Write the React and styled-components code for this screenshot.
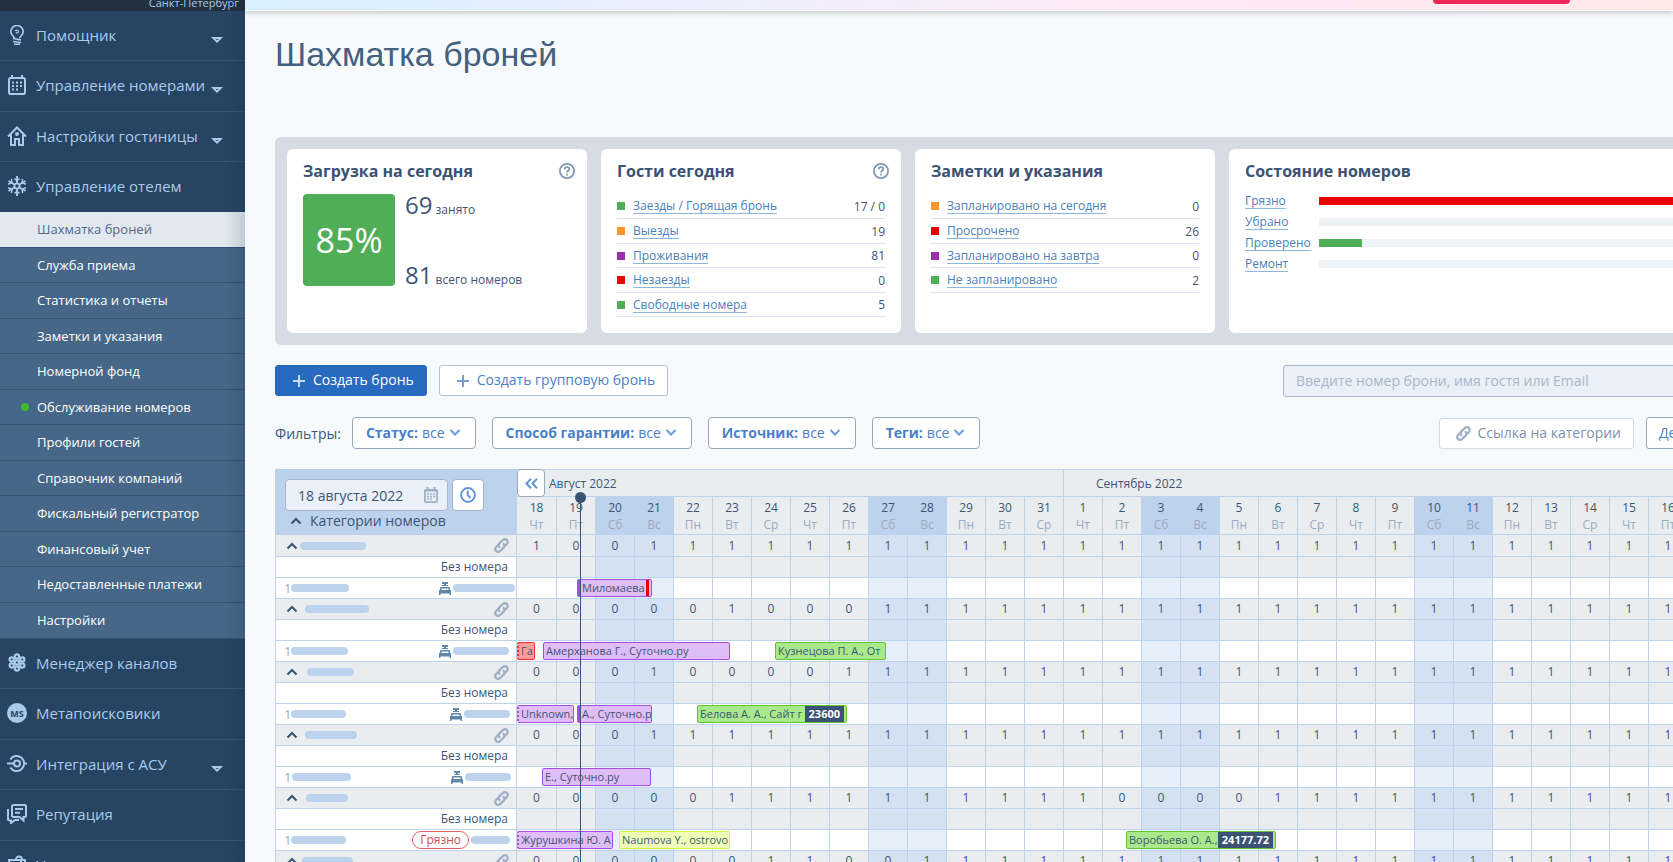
import { Fragment } from "react";
import styled, { createGlobalStyle, css } from "styled-components";

const DAY_WIDTH = 39;

const menuTop = [
  { icon: "bulb", label: "Помощник", arrow: true },
  { icon: "calendar", label: "Управление номерами", arrow: true },
  { icon: "house", label: "Настройки гостиницы", arrow: true },
  { icon: "snow", label: "Управление отелем", open: true },
  { icon: "flower", label: "Менеджер каналов" },
  { icon: "ms", label: "Метапоисковики" },
  { icon: "target", label: "Интеграция с АСУ", arrow: true },
  { icon: "chat", label: "Репутация" },
  { icon: "bag", label: "Услуги" },
];

const subMenu = [
  { label: "Шахматка броней", active: true },
  { label: "Служба приема" },
  { label: "Статистика и отчеты" },
  { label: "Заметки и указания" },
  { label: "Номерной фонд" },
  { label: "Обслуживание номеров", dot: true },
  { label: "Профили гостей" },
  { label: "Справочник компаний" },
  { label: "Фискальный регистратор" },
  { label: "Финансовый учет" },
  { label: "Недоставленные платежи" },
  { label: "Настройки" },
];

const guests = [
  { color: "#50ad58", label: "Заезды / Горящая бронь", value: "17 / 0" },
  { color: "#ff962d", label: "Выезды", value: "19" },
  { color: "#9a2fae", label: "Проживания", value: "81" },
  { color: "#ea0000", label: "Незаезды", value: "0" },
  { color: "#50ad58", label: "Свободные номера", value: "5" },
];

const notes = [
  { color: "#ff962d", label: "Запланировано на сегодня", value: "0" },
  { color: "#ea0000", label: "Просрочено", value: "26" },
  { color: "#9a2fae", label: "Запланировано на завтра", value: "0" },
  { color: "#50ad58", label: "Не запланировано", value: "2" },
];

const roomStates = [
  { label: "Грязно", color: "#ea0000", percent: 100 },
  { label: "Убрано", color: "#50ad58", percent: 0 },
  { label: "Проверено", color: "#50ad58", percent: 11.5 },
  { label: "Ремонт", color: "#50ad58", percent: 0 },
];

const filters = ["Статус:", "Способ гарантии:", "Источник:", "Теги:"];

const weekDays = ["Чт", "Пт", "Сб", "Вс", "Пн", "Вт", "Ср"];

const days = Array.from({ length: 31 }, (_, i) => {
  const name = weekDays[i % 7];
  return {
    number: i < 14 ? i + 18 : i - 13,
    name,
    weekend: name === "Сб" || name === "Вс",
  };
});

const groups = [
  {
    free: "1001",
    name: [24, 66],
    room: [15, 58],
    bed: true,
    tag: 62,
    tagEnd: 1,
    bookings: [
      { start: 60, width: 75, kind: "purple", text: "Миломаева", edge: "solid", debt: true },
    ],
  },
  {
    free: "000001000",
    name: [29, 64],
    room: [15, 57],
    bed: true,
    tag: 56,
    tagEnd: 7,
    bookings: [
      { start: 0, width: 18, kind: "red", text: "Га", edge: "dotted" },
      { start: 26, width: 187, kind: "purple", text: "Амерханова Г., Суточно.ру" },
      { start: 258, width: 111, kind: "green", text: "Кузнецова П. А., От" },
    ],
  },
  {
    free: "00010000",
    name: [31, 47],
    room: [15, 55],
    bed: true,
    tag: 46,
    tagEnd: 6,
    bookings: [
      { start: 0, width: 57, kind: "purple", text: "Unknown,", edge: "dotted" },
      { start: 60, width: 75, kind: "purple", text: "А., Суточно.ру", edge: "solid" },
      { start: 180, width: 150, kind: "green", text: "Белова А. А., Сайт г", sum: "23600" },
    ],
  },
  {
    free: "0001",
    name: [29, 52],
    room: [16, 59],
    bed: true,
    tag: 46,
    tagEnd: 5,
    bookings: [{ start: 25, width: 109, kind: "purple", text: "Е., Суточно.ру" }],
  },
  {
    free: "0000011111111110000",
    name: [30, 42],
    room: [15, 55],
    dirty: true,
    tag: 39,
    tagEnd: 6,
    bookings: [
      { start: 0, width: 96, kind: "purple", text: "Журушкина Ю. А", edge: "dotted" },
      { start: 102, width: 111, kind: "yellow", text: "Naumova Y., ostrovo" },
      { start: 609, width: 150, kind: "green", text: "Воробьева О. А.,", sum: "24177.72" },
    ],
  },
  {
    free: "0000001100",
    name: [26, 51],
    room: [15, 55],
    bed: true,
    tag: 46,
    tagEnd: 6,
    bookings: [],
  },
];

const icons = {
  bulb: (
    <g fill="none" stroke="currentColor" strokeWidth="1.7">
      <path d="M7.500 13.500c0-2.200-3.700-3.200-3.700-6.800a6.200 6.200 0 0 1 12.400 0c0 3.600-3.700 4.600-3.700 6.800" />
      <path d="M8.200 6c.8-1.200 3.300-.9 3.300.7 0 1.400-2 1.600-2.500.7" strokeWidth="1.300" />
      <path d="M6 13.500l8 1.500M6 16.500l8 1M7 19.300h6" />
    </g>
  ),
  calendar: (
    <g fill="none" stroke="currentColor" strokeWidth="2">
      <rect x="2" y="3" width="16" height="16" rx="1.800" />
      <path d="M5 0v3M15 0v3" />
      <path
        d="M5 7.500h2M9 7.500h2M13 7.500h2M5 11h2M9 11h2M13 11h2M5 14.500h2M9 14.500h2"
      />
    </g>
  ),
  house: (
    <g fill="none" stroke="currentColor" strokeWidth="2">
      <path d="M1 10.500l9-9 9 9" />
      <path d="M4 8.500v10.500h4v-6h4v6h4V8.500" />
      <circle cx="10" cy="8" r="2" fill="currentColor" stroke="none" />
    </g>
  ),
  snow: (
    <g fill="none" stroke="currentColor" strokeWidth="1.900">
      <circle cx="10" cy="10" r="2.600" />
      <path d="M10 0v7M10 13v7M1.500 5l6 3.500M12.500 11.500l6 3.500M18.500 5l-6 3.500M7.500 11.500l-6 3.500" />
      <path
        d="M7.500 2.500L10 4.800l2.500-2.300M7.500 17.500l2.500-2.300 2.500 2.300M1 8.300l4-1.500-.6-4M19 8.300l-4-1.500.6-4M1 11.700l4 1.500-.6 4M19 11.700l-4 1.500.6 4"
        strokeWidth="1.500"
      />
    </g>
  ),
  flower: (
    <g fill="none" stroke="currentColor" strokeWidth="2.200">
      <circle cx="10" cy="9.500" r="2.100" />
      <circle cx="10" cy="3.500" r="2.100" />
      <circle cx="10" cy="15.500" r="2.100" />
      <circle cx="4.700" cy="6.500" r="2.100" />
      <circle cx="15.300" cy="6.500" r="2.100" />
      <circle cx="4.700" cy="12.500" r="2.100" />
      <circle cx="15.300" cy="12.500" r="2.100" />
    </g>
  ),
  target: (
    <g fill="none" stroke="currentColor" strokeWidth="2">
      <circle cx="10" cy="9.500" r="3" />
      <path d="M0 9.500h7M17 9.500h3" />
      <path d="M3.300 5.500a7.500 7.500 0 1 1 0 8" />
    </g>
  ),
  chat: (
    <g fill="none" stroke="currentColor" strokeWidth="2">
      <path d="M6 1h11.500q1.500 0 1.500 1.500v9q0 1.500-1.500 1.500h-1v3.500L12.500 13H6.500Q5 13 5 11.500v-9Q5 1 6 1z" />
      <path d="M8 5h8M8 8.700h5" />
      <path d="M1 5v10.500q0 1 1.500 1H4V19l4-3h4" />
    </g>
  ),
  bag: (
    <g fill="none" stroke="currentColor" strokeWidth="1.900">
      <path d="M2 20V5h12v15" />
      <path d="M9 4.500c0-4 6-4 6 0M14 5h4v15" />
    </g>
  ),
};

const MenuIcon = ({ name }) =>
  name === "ms" ? (
    <MsBadge>MS</MsBadge>
  ) : (
    <svg width="20" height="20" viewBox="0 0 20 20" aria-hidden="true">
      {icons[name]}
    </svg>
  );

const MenuArrow = () => (
  <svg width="12" height="6" viewBox="0 0 12 6" aria-hidden="true">
    <path d="M0 0h12L6 6z" fill="#a9cbea" />
    <path d="M4.500 2h3L6 3.300z" fill="#274463" />
  </svg>
);

const Chevron = ({ up, size = 12, color = "#6c9bd8" }) => (
  <svg width={size} height={size} viewBox="0 0 12 12" aria-hidden="true">
    <path
      d={up ? "M1.500 8.500L6 4l4.500 4.500" : "M1.500 4L6 8.500 10.500 4"}
      fill="none"
      stroke={color}
      strokeWidth="2"
    />
  </svg>
);

const Plus = () => (
  <svg width="12" height="12" viewBox="0 0 12 12" aria-hidden="true">
    <path d="M6 0v12M0 6h12" stroke="currentColor" strokeWidth="2" opacity=".75" />
  </svg>
);

const LinkIcon = () => (
  <svg width="15" height="15" viewBox="0 0 14 14" aria-hidden="true">
    <g fill="none" stroke="#a0afc4" strokeWidth="2.100" strokeLinecap="round">
      <path d="M5 8.500a2.600 2.600 0 0 1 0-3.500L8.300 1.900a2.600 2.600 0 0 1 3.700 3.700L10.600 7" />
      <path d="M9 5.500a2.600 2.600 0 0 1 0 3.500l-3.300 3.100A2.600 2.600 0 0 1 2 8.400L3.400 7" />
    </g>
  </svg>
);

const BedIcon = () => (
  <svg width="12" height="13" viewBox="0 0 12 13" aria-hidden="true">
    <g fill="#5f88a9">
      <path d="M3 0h6v2H7v1h2v1H3V3h2V2H3z" />
      <path d="M2 5h8q1 0 1 1v2h1v5h-1.500v-1.500h-9V13H0V8h1V6q0-1 1-1zm.5 1.500V8h7V6.500z" />
    </g>
  </svg>
);

const HelpIcon = () => (
  <svg width="16" height="16" viewBox="0 0 16 16" aria-hidden="true">
    <g fill="none" stroke="#7f98b3" strokeWidth="1.800">
      <circle cx="8" cy="8" r="7.100" />
      <path d="M5.700 6.300c0-3 4.600-2.900 4.600-.2C10.300 7.800 8 7.800 8 9.500" />
      <path d="M8 10.800v1.600" />
    </g>
  </svg>
);

const CalendarIcon = () => (
  <svg width="14" height="16" viewBox="0 0 14 16" aria-hidden="true">
    <g fill="none" stroke="#9fb0c6">
      <rect x=".9" y="2.900" width="12.200" height="12.200" rx="1" strokeWidth="1.800" />
      <path d="M3.500 0v3M10.500 0v3M1 3.500h12" strokeWidth="2" />
      <path d="M3 7h2M6 7h2M9 7h2M3 9.500h2M6 9.500h2M9 9.500h2M3 12h2M6 12h2" strokeWidth="1.600" />
    </g>
  </svg>
);

const ClockIcon = () => (
  <svg width="16" height="16" viewBox="0 0 16 16" aria-hidden="true">
    <g fill="none" stroke="#6496d8" strokeWidth="2">
      <circle cx="8" cy="8" r="6.900" />
      <path d="M7.700 3.500V8l2.600 3" />
    </g>
  </svg>
);

const DoubleLeft = () => (
  <svg width="13" height="11" viewBox="0 0 13 11" aria-hidden="true">
    <path
      d="M6 .8L1.500 5.500 6 10.200M12 .8L7.500 5.500 12 10.200"
      fill="none"
      stroke="#6496d8"
      strokeWidth="2"
    />
  </svg>
);

const StatCard = ({ title, rows, help }) => (
  <Card>
    <CardTitle>
      {title}
      {help && <HelpIcon />}
    </CardTitle>
    <StatList>
      {rows.map((row) => (
        <StatRow key={row.label}>
          <Marker $color={row.color} />
          <DataLink href="#">{row.label}</DataLink>
          <StatValue>{row.value}</StatValue>
        </StatRow>
      ))}
    </StatList>
  </Card>
);

const App = () => {
  return (
    <Page>
      <GlobalStyle />
      <Sidebar>
        <City>Санкт-Петербург</City>
        <Menu>
          {menuTop.map((item) => (
            <MenuItem key={item.label}>
              <MenuLink href="#" $open={item.open}>
                <IconSlot>
                  <MenuIcon name={item.icon} />
                </IconSlot>
                {item.label}
                {item.arrow && (
                  <ArrowSlot>
                    <MenuArrow />
                  </ArrowSlot>
                )}
              </MenuLink>
              {item.open && (
                <SubMenu>
                  {subMenu.map((sub) => (
                    <SubItem key={sub.label} $active={sub.active}>
                      {sub.dot && <Dot />}
                      <a href="#">{sub.label}</a>
                    </SubItem>
                  ))}
                </SubMenu>
              )}
            </MenuItem>
          ))}
        </Menu>
        <SidebarShade />
      </Sidebar>

      <Main>
        <Banner>
          <BannerButton aria-label="Подробнее" />
        </Banner>
        <Content>
          <Title>Шахматка броней</Title>

          <Panel>
            <Card>
              <CardTitle>
                Загрузка на сегодня
                <HelpIcon />
              </CardTitle>
              <Occupancy>
                <Percent>85%</Percent>
                <Totals>
                  <p>
                    <big>69</big> занято
                  </p>
                  <p>
                    <big>81</big> всего номеров
                  </p>
                </Totals>
              </Occupancy>
            </Card>
            <StatCard title="Гости сегодня" rows={guests} help />
            <StatCard title="Заметки и указания" rows={notes} />
            <Card $wide>
              <CardTitle>Состояние номеров</CardTitle>
              {roomStates.map((state) => (
                <StateRow key={state.label}>
                  <span>
                    <DataLink href="#">{state.label}</DataLink>
                  </span>
                  <Track>
                    <Bar $color={state.color} style={{ width: `${state.percent}%` }} />
                  </Track>
                </StateRow>
              ))}
            </Card>
          </Panel>

          <Toolbar>
            <PrimaryButton>
              <Plus />
              Создать бронь
            </PrimaryButton>
            <OutlineButton>
              <Plus />
              Создать групповую бронь
            </OutlineButton>
            <Search
              type="search"
              aria-label="Поиск брони"
              placeholder="Введите номер брони, имя гостя или Email"
            />
          </Toolbar>

          <Filters>
            <FiltersLabel>Фильтры:</FiltersLabel>
            {filters.map((name) => (
              <Filter key={name}>
                <b>{name}</b>
                <select>
                  <option>все</option>
                </select>
                <Chevron />
              </Filter>
            ))}
            <FiltersRight>
              <CategoryButton>
                <LinkIcon />
                Ссылка на категории
              </CategoryButton>
              <PeriodButton>День</PeriodButton>
            </FiltersRight>
          </Filters>

          <Board>
            <Table>
              <thead>
                <tr>
                  <Corner rowSpan={2}>
                    <DateRow>
                      <DateField>
                        <input aria-label="Дата" defaultValue="18 августа 2022" />
                        <CalendarIcon />
                      </DateField>
                      <ClockButton aria-label="Сегодня">
                        <ClockIcon />
                      </ClockButton>
                    </DateRow>
                    <CategoriesToggle>
                      <Chevron up color="#3a5274" />
                      Категории номеров
                    </CategoriesToggle>
                  </Corner>
                  <Month colSpan={14}>
                    <PrevButton aria-label="Назад">
                      <DoubleLeft />
                    </PrevButton>
                    Август 2022
                  </Month>
                  <Month colSpan={17}>Сентябрь 2022</Month>
                </tr>
                <tr>
                  {days.map((day, i) => (
                    <DayHead key={i} $weekend={day.weekend}>
                      {day.number}
                      <span>{day.name}</span>
                    </DayHead>
                  ))}
                </tr>
              </thead>
              <tbody>
                {groups.map((group, g) => (
                  <Fragment key={g}>
                    <GroupRow>
                      <GroupCell>
                        <RowLine>
                          <Chevron up color="#3a5274" />
                          <Smudge $left={group.name[0]} $width={group.name[1]} />
                          <PushRight>
                            <LinkIcon />
                          </PushRight>
                        </RowLine>
                      </GroupCell>
                      {days.map((day, i) => (
                        <CountCell key={i} $weekend={day.weekend}>
                          {group.free[i] || "1"}
                        </CountCell>
                      ))}
                    </GroupRow>
                    <tr>
                      <NoRoomCell>Без номера</NoRoomCell>
                      {days.map((day, i) => (
                        <CountCell key={i} $weekend={day.weekend} />
                      ))}
                    </tr>
                    <tr>
                      <RoomCell>
                        <RowLine>
                          1
                          <Smudge $left={group.room[0]} $width={group.room[1]} />
                          <PushRight $end={group.tagEnd}>
                            {group.bed && <BedIcon />}
                            {group.dirty && <Dirty>Грязно</Dirty>}
                            <Scribble $width={group.tag} />
                          </PushRight>
                        </RowLine>
                      </RoomCell>
                      {days.map((day, i) => (
                        <RoomDay key={i} $weekend={day.weekend}>
                          {i === 0 &&
                            group.bookings.map((b) => (
                              <Booking
                                key={b.start}
                                $kind={b.kind}
                                $edge={b.edge}
                                style={{ left: b.start, width: b.width }}
                              >
                                <BookingText>{b.text}</BookingText>
                                {b.debt && <Debt />}
                                {b.sum && <Sum>{b.sum}</Sum>}
                              </Booking>
                            ))}
                        </RoomDay>
                      ))}
                    </tr>
                  </Fragment>
                ))}
              </tbody>
            </Table>
            <NowLine />
          </Board>
        </Content>
      </Main>
    </Page>
  );
};

export default App;

const GlobalStyle = createGlobalStyle`
  * {
    box-sizing: border-box;
  }
  body {
    margin: 0;
    background: #f6fafd;
    font-family: "Open Sans", "Noto Sans", sans-serif;
    font-size: 14px;
    color: #3f5575;
  }
  button, input, select {
    font: inherit;
    color: inherit;
  }
  a {
    color: inherit;
    text-decoration: none;
  }
`;

const line = "#bdd2ec";

const Page = styled.div`
  display: flex;
  height: 100vh;
  overflow: hidden;
`;

const Sidebar = styled.nav`
  position: relative;
  flex: none;
  width: 245px;
  background: #274463;
  color: #a9cbea;
`;

const SidebarShade = styled.div`
  position: absolute;
  top: 0;
  right: 0;
  bottom: 0;
  width: 20px;
  background: linear-gradient(to right, rgba(20, 40, 60, 0), rgba(20, 40, 60, 0.15));
  pointer-events: none;
`;

const City = styled.div`
  display: flex;
  align-items: flex-end;
  justify-content: flex-end;
  height: 11px;
  padding-right: 6px;
  overflow: hidden;
  background: #223040;
  font-size: 11px;
  line-height: 16px;
`;

const Menu = styled.ul`
  margin: 0;
  padding: 0;
  list-style: none;
`;

const MenuLink = styled.a`
  display: flex;
  align-items: center;
  height: ${(props) => (props.$open ? "50px" : "51px")};
  padding: 0 22px 2px 7px;
  border-bottom: ${(props) => (props.$open ? "0" : "1px solid #345474")};
  font-size: 15px;
  white-space: nowrap;
`;

const MenuItem = styled.li`
  &:nth-child(odd) > ${MenuLink} {
    height: 50px;
  }
`;

const IconSlot = styled.span`
  display: flex;
  margin-right: 9px;
`;

const ArrowSlot = styled.span`
  display: flex;
  margin-left: auto;
  padding-top: 10px;
`;

const MsBadge = styled.span`
  display: flex;
  align-items: center;
  justify-content: center;
  width: 20px;
  height: 20px;
  border-radius: 50%;
  background: #a9cbea;
  color: #274463;
  font-size: 9px;
  font-weight: 700;
`;

const SubMenu = styled.ul`
  margin: 0;
  padding: 0;
  list-style: none;
  background: #466788;
  color: #ffffff;
`;

const SubItem = styled.li`
  position: relative;
  display: flex;
  align-items: center;
  height: 36px;
  padding: 0 0 1px 37px;
  border-bottom: 1px solid #345474;
  font-size: 13px;
  font-weight: 500;

  &:nth-child(even) {
    height: 35px;
  }
  &:last-child {
    height: 36px;
  }
  ${(props) =>
    props.$active &&
    css`
      background: #e1e8ef;
      color: #50698a;
      font-weight: 400;
    `}
`;

const Dot = styled.span`
  position: absolute;
  left: 21px;
  width: 8px;
  height: 8px;
  border-radius: 50%;
  background: #3bb92f;
`;

const Main = styled.main`
  flex: 1;
  min-width: 0;
  overflow: hidden;
`;

const Banner = styled.div`
  display: flex;
  justify-content: flex-end;
  height: 11px;
  padding-right: 103px;
  border-bottom: 1px solid #ffffff;
  background: linear-gradient(to right, #d8f0ff, #eeeefc 35%, #ffe8f7 65%, #ffe8e6);
  box-shadow: 0 2px 5px rgba(60, 60, 60, 0.25);
`;

const BannerButton = styled.button`
  width: 137px;
  height: 4px;
  padding: 0;
  border: 0;
  border-radius: 0 0 4px 4px;
  background: #f0265a;
`;

const Content = styled.div`
  min-width: 1478px;
  padding: 23px 0 0 30px;
`;

const Title = styled.h1`
  margin: 0 0 63px;
  font-family: "Liberation Sans", Arial, sans-serif;
  font-size: 34px;
  font-weight: 400;
  line-height: 40px;
  color: #44607f;
`;

const Panel = styled.section`
  display: flex;
  gap: 14px;
  padding: 12px;
  border-radius: 6px;
  background: #d7dbe3;
`;

const Card = styled.div`
  flex: ${(props) => (props.$wide ? "1" : "0 0 300px")};
  min-height: 184px;
  padding: 11px 16px 16px;
  border-radius: 6px;
  background: #ffffff;
`;

const CardTitle = styled.h2`
  display: flex;
  align-items: center;
  justify-content: space-between;
  margin: 0 -4px 8px 0;
  font-size: 16px;
  font-weight: 700;
  line-height: 22px;
  color: #3a5274;
`;

const Occupancy = styled.div`
  display: flex;
  gap: 10px;
  padding-top: 4px;
`;

const Percent = styled.div`
  display: flex;
  align-items: center;
  justify-content: center;
  width: 92px;
  height: 92px;
  border-radius: 4px;
  background: #50ad58;
  color: #ffffff;
  font-size: 34px;
`;

const Totals = styled.div`
  display: flex;
  flex-direction: column;
  gap: 43px;

  p {
    margin: 0;
    font-size: 12px;
    line-height: 22px;
  }
  big {
    font-size: 24px;
  }
`;

const StatList = styled.ul`
  margin: 0;
  padding: 4px 0 0;
  list-style: none;
`;

const StatRow = styled.li`
  display: flex;
  align-items: center;
  height: 24px;
  border-bottom: 1px solid #dbe5f1;
  font-size: 12px;

  &:first-child,
  &:nth-child(even) {
    height: 25px;
  }
`;

const Marker = styled.span`
  width: 8px;
  height: 8px;
  margin-right: 8px;
  background: ${(props) => props.$color};
`;

const StatValue = styled.span`
  margin-left: auto;
`;

const DataLink = styled.a`
  display: inline-block;
  border-bottom: 1px solid #8db6df;
  font-size: 12px;
  line-height: 15px;
  color: #4a7fb8;
`;

const StateRow = styled.div`
  display: grid;
  grid-template-columns: 66px 1fr;
  gap: 8px;
  align-items: center;
  height: 21px;
  line-height: 16px;
`;

const Track = styled.div`
  height: 8px;
  background: #eef3f6;
`;

const Bar = styled.div`
  height: 100%;
  background: ${(props) => props.$color};
`;

const Toolbar = styled.div`
  display: flex;
  gap: 12px;
  margin-top: 20px;
`;

const ToolButton = styled.button`
  display: flex;
  align-items: center;
  height: 31px;
  padding: 0 12px 2px;
  border: 1px solid #b3c2d6;
  border-radius: 3px;
  background: #ffffff;
  white-space: nowrap;

  svg {
    margin-top: 3px;
  }
`;

const PrimaryButton = styled(ToolButton)`
  gap: 8px;
  padding-left: 17px;
  border-color: #276ac0;
  background: #276ac0;
  color: #ffffff;
`;

const OutlineButton = styled(ToolButton)`
  gap: 8px;
  padding-left: 17px;
  color: #4a7fca;
`;

const Search = styled.input`
  width: 440px;
  height: 32px;
  margin-left: auto;
  padding: 0 12px 1px;
  border: 1px solid #a9b6ca;
  border-radius: 3px;
  background: #e9f0f8;

  &::placeholder {
    color: #a9b6c9;
  }
`;

const Filters = styled.div`
  display: flex;
  align-items: center;
  gap: 16px;
  margin-top: 20px;
`;

const FiltersLabel = styled.span`
  margin-right: -5px;
`;

const Filter = styled.label`
  display: flex;
  align-items: center;
  gap: 4px;
  height: 32px;
  padding: 0 14px 2px 13px;
  border: 1px solid #9aa8bd;
  border-radius: 4px;
  background: #ffffff;
  color: #4a7fca;
  white-space: nowrap;

  b {
    font-weight: 700;
  }
  select {
    appearance: none;
    field-sizing: content;
    padding: 0;
    border: 0;
    background: none;
  }
`;

const FiltersRight = styled.div`
  display: flex;
  align-items: center;
  gap: 12px;
  margin-left: auto;
`;

const CategoryButton = styled(ToolButton)`
  gap: 7px;
  padding-left: 16px;
  border-color: #d3dae4;
  color: #7f90aa;
`;

const PeriodButton = styled(ToolButton)`
  width: 77px;
  height: 32px;
  border-color: #9aa8bd;
  color: #4a7fca;
`;

const Board = styled.div`
  position: relative;
  margin-top: 20px;
`;

const Table = styled.table`
  border-top: 1px solid ${line};
  border-left: 1px solid ${line};
  border-spacing: 0;

  th,
  td {
    padding: 0;
    border-right: 1px solid ${line};
    border-bottom: 1px solid ${line};
    font-weight: 400;
  }
`;

const Corner = styled.th`
  width: 241px;
  min-width: 241px;
  background: ${line};
  text-align: left;
  vertical-align: top;
`;

const DateRow = styled.div`
  display: flex;
  gap: 4px;
  padding: 9px 0 0 9px;
`;

const DateField = styled.div`
  display: flex;
  align-items: center;
  width: 163px;
  height: 32px;
  padding: 0 9px 0 12px;
  border: 1px solid #a9b6ca;
  border-radius: 4px;
  background: #e9f0f8;

  input {
    flex: 1;
    min-width: 0;
    padding: 0;
    border: 0;
    background: none;
  }
`;

const ClockButton = styled.button`
  display: flex;
  align-items: center;
  justify-content: center;
  width: 32px;
  height: 32px;
  padding: 0;
  border: 1px solid #a9b6ca;
  border-radius: 4px;
  background: #ffffff;
`;

const CategoriesToggle = styled.div`
  display: flex;
  align-items: center;
  gap: 8px;
  padding-left: 14px;
  line-height: 20px;
`;

const Month = styled.th`
  position: relative;
  height: 27px;
  background: #e9edf0;
  font-size: 12px;
  text-align: left;

  && {
    padding-left: 32px;
  }
`;

const PrevButton = styled.button`
  position: absolute;
  top: -1px;
  left: 0;
  display: flex;
  align-items: center;
  justify-content: center;
  width: 28px;
  height: 28px;
  padding: 0;
  border: 1px solid #9aa8bd;
  border-radius: 4px;
  background: #ffffff;
`;

const DayHead = styled.th`
  width: ${DAY_WIDTH}px;
  min-width: ${DAY_WIDTH}px;
  height: 38px;
  background: ${(props) => (props.$weekend ? line : "#e9edf0")};
  font-size: 12px;
  line-height: 17px;

  &:first-child {
    min-width: ${DAY_WIDTH + 1}px;
  }
  span {
    display: block;
    color: #9eabc0;
  }
`;

const GroupRow = styled.tr`
  &:first-child td {
    height: 22px;
  }
`;

const RowLine = styled.div`
  position: relative;
  display: flex;
  align-items: center;
  height: 20px;
`;

const GroupCell = styled.td`
  height: 21px;
  background: #e9edf0;

  ${RowLine} {
    padding: 0 7px 0 10px;
  }
`;

const NoRoomCell = styled.td`
  background: #ffffff;
  font-size: 12px;
  line-height: 18px;
  text-align: right;

  && {
    padding-right: 8px;
  }
`;

const RoomCell = styled.td`
  background: #ffffff;
  font-size: 13px;
  color: #9eabc0;

  ${RowLine} {
    padding-left: 8px;
  }
`;

const CountCell = styled.td`
  height: 21px;
  background: ${(props) => (props.$weekend ? "#d4e1f3" : "#e9edf0")};
  font-size: 12px;
  line-height: 18px;
  text-align: center;
`;

const RoomDay = styled.td`
  position: relative;
  height: 21px;
  background: ${(props) => (props.$weekend ? "#e7effa" : "#ffffff")};
`;

const PushRight = styled.span`
  display: flex;
  align-items: center;
  gap: 2px;
  margin-left: auto;
  padding-right: ${(props) => props.$end || 0}px;
`;

const Scribble = styled.span`
  width: ${(props) => props.$width}px;
  height: 8px;
  border-radius: 4px;
  background: ${line};
`;

const Smudge = styled(Scribble)`
  position: absolute;
  left: ${(props) => props.$left}px;
`;

const Dirty = styled.span`
  height: 18px;
  padding: 0 7px;
  border: 1px solid #d96262;
  border-radius: 9px;
  font-size: 12px;
  line-height: 16px;
  color: #d05050;
`;

const bookingKinds = {
  purple: ["#a64ee0", "#dfbdf6"],
  green: ["#5fc42f", "#a9e98b"],
  yellow: ["#d3f53a", "#efffb8"],
  red: ["#ff2a2a", "#ff9d9d"],
};

const Booking = styled.div`
  position: absolute;
  top: 1px;
  z-index: 1;
  display: flex;
  height: 18px;
  padding-left: 2px;
  overflow: hidden;
  border: 1px solid ${(props) => bookingKinds[props.$kind][0]};
  border-radius: 2px;
  background: ${(props) => bookingKinds[props.$kind][1]};
  font-size: 11px;
  line-height: 16px;
  white-space: nowrap;
  ${(props) =>
    props.$edge &&
    css`
      border-left-width: ${props.$edge === "solid" ? 3 : 2}px;
      border-left-style: ${props.$edge};
    `}
`;

const BookingText = styled.span`
  flex: 1;
  min-width: 0;
  overflow: hidden;
`;

const Debt = styled.span`
  width: 3px;
  margin-right: 2px;
  background: #ea0000;
`;

const Sum = styled.span`
  margin-right: 2px;
  padding: 0 4px;
  background: #3a5274;
  color: #ffffff;
  font-size: 11px;
  font-weight: 700;
`;

const NowLine = styled.div`
  position: absolute;
  top: 28px;
  bottom: 0;
  left: 305px;
  z-index: 2;
  width: 1px;
  background: #3a5274;

  &::before {
    content: "";
    position: absolute;
    top: -5px;
    left: -5px;
    width: 11px;
    height: 11px;
    border-radius: 50%;
    background: #3a5274;
  }
`;
